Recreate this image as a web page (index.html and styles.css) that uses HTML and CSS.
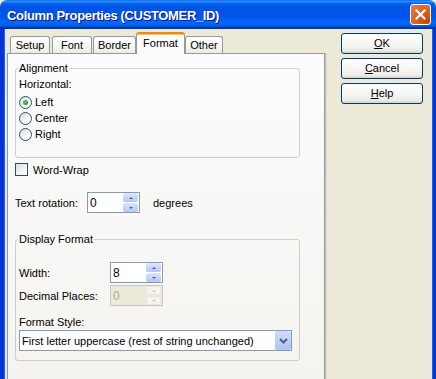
FILE: index.html
```html
<!DOCTYPE html>
<html lang="en">
<head>
  <meta charset="UTF-8">
  <title>Column Properties</title>
  <link rel="stylesheet" href="styles.css">
</head>
<body>
  <div class="window">
    <div class="titlebar">
      <span class="title">Column Properties (CUSTOMER_ID)</span>
      <span class="close">
        <svg width="11" height="11" viewBox="0 0 11 11">
          <path d="M1.5 1.5 L9.5 9.5 M9.5 1.5 L1.5 9.5" stroke="#fff" stroke-width="2.2" stroke-linecap="square"/>
        </svg>
      </span>
    </div>

    <div class="frame">
      <div class="tabs">
        <div class="tabstrip">
          <div class="tab tab-setup">Setup</div>
          <div class="tab tab-font">Font</div>
          <div class="tab tab-border">Border</div>
          <div class="tab tab-format active">Format</div>
          <div class="tab tab-other">Other</div>
        </div>

        <div class="page">
          <!-- Alignment -->
          <fieldset class="group group-align">
            <legend>Alignment</legend>
            <div class="caption">Horizontal:</div>
            <div class="radios">
              <div class="radio-row"><span class="radio checked"></span>Left</div>
              <div class="radio-row"><span class="radio"></span>Center</div>
              <div class="radio-row"><span class="radio"></span>Right</div>
            </div>
          </fieldset>

          <div class="check-row"><span class="checkbox"></span>Word-Wrap</div>

          <div class="field-row rotation">
            <span class="field-label">Text rotation:</span>
            <div class="spin">
              <span class="spin-value">0</span>
              <div class="spin-buttons">
                <span class="spin-btn"><i class="arrow-up"></i></span>
                <span class="spin-btn"><i class="arrow-down"></i></span>
              </div>
            </div>
            <span class="unit">degrees</span>
          </div>

          <!-- Display format -->
          <fieldset class="group group-format">
            <legend>Display Format</legend>
            <div class="field-row">
              <span class="field-label wide">Width:</span>
              <div class="spin">
                <span class="spin-value">8</span>
                <div class="spin-buttons">
                  <span class="spin-btn"><i class="arrow-up"></i></span>
                  <span class="spin-btn"><i class="arrow-down"></i></span>
                </div>
              </div>
            </div>
            <div class="field-row decimals">
              <span class="field-label wide">Decimal Places:</span>
              <div class="spin disabled">
                <span class="spin-value">0</span>
                <div class="spin-buttons">
                  <span class="spin-btn"><i class="arrow-up"></i></span>
                  <span class="spin-btn"><i class="arrow-down"></i></span>
                </div>
              </div>
            </div>
            <div class="caption style-label">Format Style:</div>
            <div class="combo">
              <span class="combo-value">First letter uppercase (rest of string unchanged)</span>
              <span class="combo-btn">
                <svg width="9" height="6" viewBox="0 0 9 6">
                  <path d="M1 1 L4.5 4.5 L8 1" fill="none" stroke="#4d6185" stroke-width="2"/>
                </svg>
              </span>
            </div>
          </fieldset>
        </div>
      </div>

      <div class="buttons">
        <div class="button"><u>O</u>K</div>
        <div class="button"><u>C</u>ancel</div>
        <div class="button"><u>H</u>elp</div>
      </div>
    </div>
  </div>
</body>
</html>
```

FILE: styles.css
```css
/* Page */
body {
  margin: 0;
  font-family: "Liberation Sans", Arial, sans-serif;
  font-size: 11px;
  color: #000;
  background: #ece9d8;
}

.window {
  width: 436px;
  height: 379px;
  overflow: hidden;
  display: flex;
  flex-direction: column;
}

/* Title bar */
.titlebar {
  height: 29px;
  flex: none;
  display: flex;
  align-items: center;
  justify-content: space-between;
  padding: 0 5px 0 7px;
  box-sizing: border-box;
  border-radius: 7px 7px 0 0;
  background: linear-gradient(180deg, #0058ee 0%, #3593ff 4%, #288eff 6%, #127dff 8%, #036ffc 10%, #0262ee 14%, #0057e5 20%, #0054e3 24%, #0055eb 56%, #005bf5 66%, #026afe 76%, #0062ef 86%, #0052d6 92%, #0040ab 94%, #003092 100%);
}

.title {
  color: #fff;
  font-weight: bold;
  font-size: 13px;
  letter-spacing: -0.35px;
  text-shadow: 1px 1px #0f1089;
  padding-top: 2px;
}

.close {
  width: 21px;
  height: 21px;
  box-sizing: border-box;
  border: 1px solid #fff;
  border-radius: 3px;
  display: flex;
  align-items: center;
  justify-content: center;
  background: radial-gradient(circle at 85% 85%, #cc4600 0%, #dc6527 55%, #e27d55 100%);
}

/* Frame */
.frame {
  flex: 1;
  display: flex;
  border-left: 4px solid #0831d9;
  border-right: 3px solid #0831d9;
  padding: 4px 0 0 3px;
  box-shadow: inset 1px 0 #166aee, inset -1px 0 #166aee;
}

.tabs {
  width: 318px;
  display: flex;
  flex-direction: column;
}

.tabstrip {
  height: 20px;
  display: flex;
  align-items: flex-end;
  padding-left: 3px;
}

.tab {
  height: 17px;
  line-height: 17px;
  box-sizing: border-box;
  text-align: center;
  border: 1px solid #919b9c;
  border-bottom: none;
  border-radius: 3px 3px 0 0;
  background: linear-gradient(180deg, #fff 0%, #f7f7f4 50%, #ecebe5 100%);
}

.tab-setup {
  width: 40px;
  margin-right: 2px;
}

.tab-font {
  width: 40px;
  margin-right: 1px;
}

.tab-border {
  width: 43px;
}

.tab-format {
  width: 49px;
}

.tab-other {
  width: 38px;
}

.tab.active {
  height: 22px;
  line-height: 19px;
  margin-bottom: -1px;
  border-top: 2px solid #e68b2c;
  box-shadow: inset 0 1px #ffc83c;
  background: #fcfcfe;
  position: relative;
  z-index: 1;
}

.page {
  height: 330px;
  border: 1px solid #919b9c;
  padding: 0 7px;
  background: linear-gradient(180deg, #fcfcfe 0%, #f4f3ee 100%);
  box-shadow: 1px 0 #c4c2b6, 2px 0 #dedbcb;
}

/* Group boxes */
.group {
  margin: 7px 0 0;
  width: 285px;
  box-sizing: border-box;
  border: 1px solid #d0d0bf;
  border-radius: 3px;
  padding: 3px 3px 15px;
}

.group legend {
  line-height: 14px;
  padding: 0 1px;
  margin-left: -1px;
}

.caption {
  line-height: 13px;
}

.radios {
  margin-top: 3px;
}

.radio-row {
  height: 16px;
  display: flex;
  align-items: center;
}

.radio {
  width: 13px;
  height: 13px;
  box-sizing: border-box;
  border: 1px solid #1c5180;
  border-radius: 50%;
  margin-right: 3px;
  background: linear-gradient(135deg, #dcdcd7 0%, #fff 75%);
  display: flex;
  align-items: center;
  justify-content: center;
}

.radio.checked::after {
  content: "";
  width: 5px;
  height: 5px;
  border-radius: 50%;
  background: radial-gradient(circle at 40% 40%, #55d551 0%, #21a121 70%);
}

.check-row {
  margin-top: 5px;
  height: 13px;
  display: flex;
  align-items: center;
}

.checkbox {
  width: 13px;
  height: 13px;
  box-sizing: border-box;
  border: 1px solid #1c5180;
  margin-right: 5px;
  background: linear-gradient(135deg, #dcdcd7 0%, #fff 85%);
}

/* Fields */
.field-row {
  display: flex;
  align-items: center;
  height: 21px;
}

.rotation {
  margin-top: 16px;
}

.field-label {
  width: 72px;
}

.field-label.wide {
  width: 91px;
}

.unit {
  margin-left: 13px;
}

.decimals {
  margin-top: 2px;
}

.spin {
  width: 53px;
  height: 21px;
  box-sizing: border-box;
  border: 1px solid #7f9db9;
  background: #fff;
  display: flex;
  justify-content: space-between;
}

.spin-value {
  padding: 3px 0 0 2px;
  font-size: 12px;
}

.spin-buttons {
  display: flex;
  flex-direction: column;
  gap: 1px;
  padding: 0 1px 0 0;
}

.spin-btn {
  width: 15px;
  height: 9px;
  border-radius: 2px;
  background: linear-gradient(180deg, #dde6fd 0%, #c4d2f8 60%, #b4c6f4 100%);
  display: flex;
  align-items: center;
  justify-content: center;
}

.arrow-up,
.arrow-down {
  width: 0;
  height: 0;
  border-left: 2px solid transparent;
  border-right: 2px solid transparent;
}

.arrow-up {
  border-bottom: 2px solid #4d6185;
}

.arrow-down {
  border-top: 2px solid #4d6185;
}

.spin.disabled {
  background: #ebeadb;
  border-color: #c9c7ba;
  color: #aca899;
}

.spin.disabled .spin-btn {
  background: #f4f3ee;
  box-shadow: inset 0 0 0 1px #e8e6dc;
}

.spin.disabled .arrow-up {
  border-bottom-color: #c9c7ba;
}

.spin.disabled .arrow-down {
  border-top-color: #c9c7ba;
}

.group-format {
  margin-top: 19px;
  padding: 16px 3px 9px;
}

.style-label {
  margin-top: 10px;
}

.combo {
  margin-top: 1px;
  width: 273px;
  height: 21px;
  box-sizing: border-box;
  border: 1px solid #7f9db9;
  background: #fff;
  display: flex;
  align-items: center;
  justify-content: space-between;
}

.combo-value {
  padding-left: 2px;
}

.combo-btn {
  width: 16px;
  height: 19px;
  border-radius: 2px;
  background: linear-gradient(180deg, #d0dcfb 0%, #bccdf8 60%, #aec2f3 100%);
  display: flex;
  align-items: center;
  justify-content: center;
}

/* Dialog buttons */
.buttons {
  display: flex;
  flex-direction: column;
  gap: 4px;
  margin-left: 16px;
}

.button {
  width: 82px;
  height: 21px;
  line-height: 19px;
  box-sizing: border-box;
  border: 1px solid #003c74;
  border-radius: 3px;
  text-align: center;
  background: linear-gradient(180deg, #fff 0%, #f4f4f0 60%, #ecebe6 86%, #d6d0c5 100%);
}
```
